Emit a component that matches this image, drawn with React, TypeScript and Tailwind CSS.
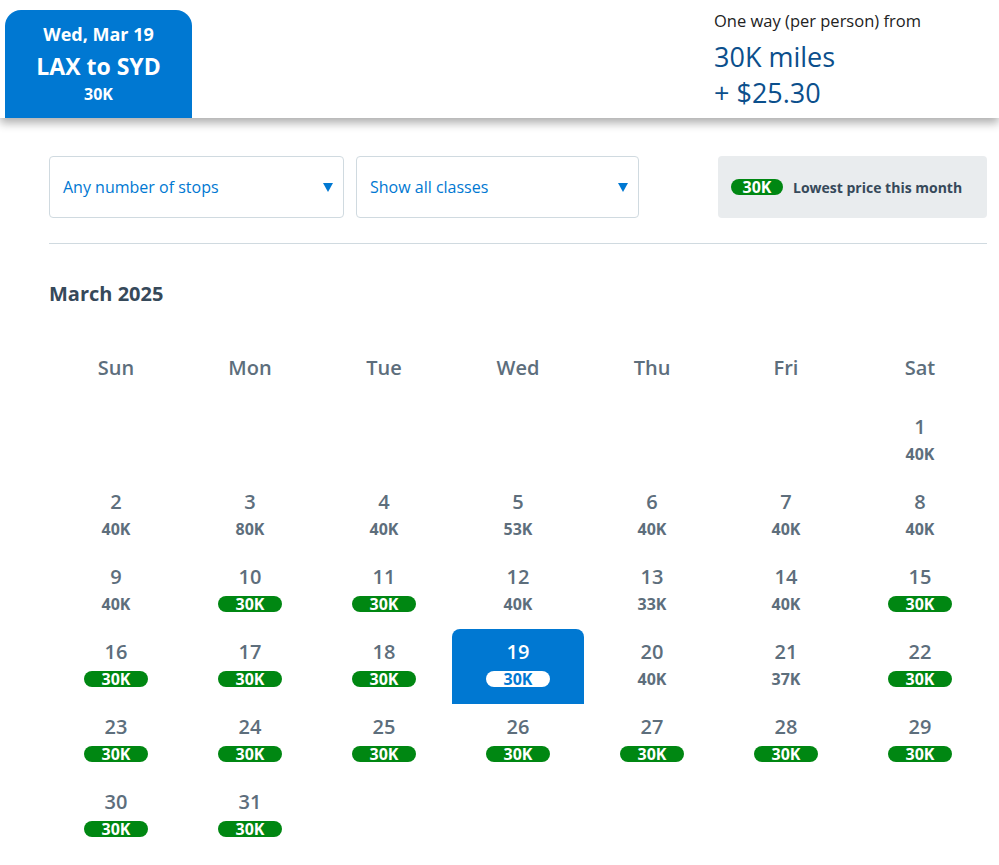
import { cx } from 'class-variance-authority';

type Day = { d: number; price: string; low?: boolean; selected?: boolean } | null;

const weekdays = ['Sun', 'Mon', 'Tue', 'Wed', 'Thu', 'Fri', 'Sat'];

const weeks: Day[][] = [
  [null, null, null, null, null, null, { d: 1, price: '40K' }],
  [
    { d: 2, price: '40K' },
    { d: 3, price: '80K' },
    { d: 4, price: '40K' },
    { d: 5, price: '53K' },
    { d: 6, price: '40K' },
    { d: 7, price: '40K' },
    { d: 8, price: '40K' }
  ],
  [
    { d: 9, price: '40K' },
    { d: 10, price: '30K', low: true },
    { d: 11, price: '30K', low: true },
    { d: 12, price: '40K' },
    { d: 13, price: '33K' },
    { d: 14, price: '40K' },
    { d: 15, price: '30K', low: true }
  ],
  [
    { d: 16, price: '30K', low: true },
    { d: 17, price: '30K', low: true },
    { d: 18, price: '30K', low: true },
    { d: 19, price: '30K', low: true, selected: true },
    { d: 20, price: '40K' },
    { d: 21, price: '37K' },
    { d: 22, price: '30K', low: true }
  ],
  [23, 24, 25, 26, 27, 28, 29].map((d) => ({ d, price: '30K', low: true })),
  [{ d: 30, price: '30K', low: true }, { d: 31, price: '30K', low: true }, null, null, null, null, null]
];

function Caret() {
  return (
    <svg width="10" height="9" viewBox="0 0 10 9" className="shrink-0">
      <path d="M0 0 H10 L5 9 Z" fill="#0078d2" />
    </svg>
  );
}

function Select({ label }: { label: string }) {
  return (
    <div className="flex h-[62px] items-center justify-between rounded-[4px] border border-[#d0dae0] bg-white pl-[13px] pr-[10px]">
      <span className="text-[16px] text-[#0078d2]">{label}</span>
      <Caret />
    </div>
  );
}

function Badge({ children, inverse }: { children: string; inverse?: boolean }) {
  return (
    <span
      className={cx(
        'inline-flex h-[16px] w-[64px] items-center justify-center rounded-full text-[16px] font-bold leading-none',
        inverse ? 'bg-white text-[#0078d2]' : 'bg-[#008712] text-white'
      )}
    >
      {children}
    </span>
  );
}

function Cell({ day }: { day: Day }) {
  if (!day) return <div className="h-[75px]" />;
  return (
    <div
      className={cx(
        'mx-px flex h-[75px] flex-col items-center pt-[10px]',
        day.selected ? 'rounded-t-[8px] bg-[#0078d2] text-white' : 'text-[#5d6e7c]'
      )}
    >
      <span className="text-[20px] font-semibold leading-[26px]">{day.d}</span>
      <span className="mt-[4px] flex h-[20px] items-center">
        {day.low ? (
          <Badge inverse={day.selected}>{day.price}</Badge>
        ) : (
          <span className="text-[16px] font-bold">{day.price}</span>
        )}
      </span>
    </div>
  );
}

export default function App() {
  return (
    <div className="min-h-[865px] bg-white font-['Open_Sans',sans-serif] text-[#36495a]">
      <header className="relative z-10 flex h-[118px] items-end justify-between bg-white shadow-[0_5px_9px_rgba(0,0,0,0.32)]">
        <div className="ml-[5px] flex h-[108px] w-[187px] flex-col items-center rounded-t-[16px] bg-[#0078d2] pt-[12px] text-white">
          <span className="text-[18px] font-bold leading-[24px]">Wed, Mar 19</span>
          <span className="mt-[5px] text-[23px] font-bold leading-[30px]">LAX to SYD</span>
          <span className="mt-[3px] text-[16px] font-bold leading-[20px]">30K</span>
        </div>
        <div className="mb-auto mr-[64px] mt-[9px] flex w-[221px] flex-col">
          <span className="text-[16.5px] leading-[24px] text-[#222]">One way (per person) from</span>
          <span className="mt-[6px] text-[27px] leading-[36px] text-[#0b4f8c]">30K miles</span>
          <span className="text-[27px] leading-[36px] text-[#0b4f8c]">+ $25.30</span>
        </div>
      </header>

      <main className="ml-[49px] w-[938px] pt-[38px]">
        <div className="flex items-center">
          <div className="w-[295px]">
            <Select label="Any number of stops" />
          </div>
          <div className="ml-[12px] w-[283px]">
            <Select label="Show all classes" />
          </div>
          <div className="ml-auto flex h-[62px] w-[269px] items-center gap-[10px] rounded-[4px] bg-[#e9ecee] pl-[13px]">
            <span className="inline-flex h-[16px] w-[52px] items-center justify-center rounded-full bg-[#008712] text-[16px] font-bold leading-none text-white">
              30K
            </span>
            <span className="text-[14px] font-bold text-[#36495a]">Lowest price this month</span>
          </div>
        </div>

        <div className="mt-[25px] h-px bg-[#d0dae0]" />

        <h2 className="mt-[36px] text-[20px] font-bold leading-[28px] text-[#36495a]">March 2025</h2>

        <div className="mt-[46px] grid grid-cols-7">
          {weekdays.map((w) => (
            <div key={w} className="text-center text-[20px] font-semibold leading-[28px] text-[#5d6e7c]">
              {w}
            </div>
          ))}
        </div>

        <div className="mt-[22px] flex flex-col">
          {weeks.map((week, i) => (
            <div key={i} className="grid grid-cols-7">
              {week.map((day, j) => (
                <Cell key={j} day={day} />
              ))}
            </div>
          ))}
        </div>
      </main>
    </div>
  );
}
